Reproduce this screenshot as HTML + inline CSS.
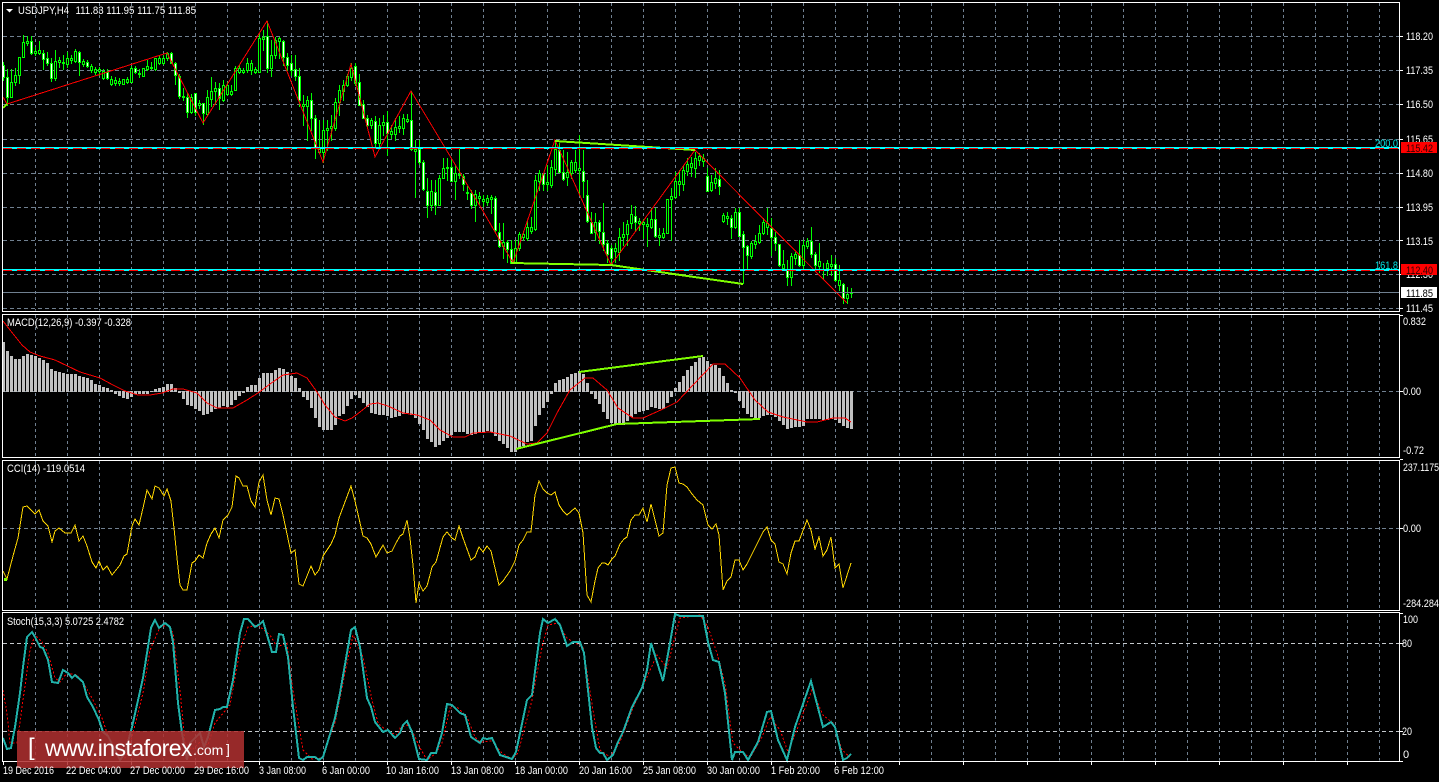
<!DOCTYPE html>
<html><head><meta charset="utf-8"><title>USDJPY,H4</title>
<style>
html,body{margin:0;padding:0;background:#000;width:1439px;height:782px;overflow:hidden}
svg{position:absolute;left:0;top:0;display:block}
text{font-family:"Liberation Sans",sans-serif;font-size:11px;fill:#fff}
#logo{position:absolute;left:17px;top:731px;width:227px;height:37px;background:rgba(176,48,48,.86);color:#fff;font-family:"Liberation Sans",sans-serif}
#logo span{position:absolute;white-space:nowrap;font-weight:400}
</style></head><body>
<svg id="c" width="1439" height="782" viewBox="0 0 1439 782" shape-rendering="crispEdges"></svg>
<div id="logo">
<span style="left:11px;top:3px;font-size:24px">[</span>
<span style="left:28px;top:4px;font-size:23px;letter-spacing:-.55px">www.instaforex</span>
<span style="left:176px;top:11px;font-size:14px">.com</span>
<span style="left:209px;top:10px;font-size:14px">]</span>
</div>
<svg width="1439" height="782" viewBox="0 0 1439 782" style="pointer-events:none">
<g>
<path d="M6 9h7l-3.5 3.5z" fill="#fff"/>
<text x="18" y="14" textLength="51" lengthAdjust="spacingAndGlyphs">USDJPY,H4</text>
<text x="75.5" y="14" textLength="120.5" lengthAdjust="spacingAndGlyphs">111.83 111.95 111.75 111.85</text>
<text x="7" y="326" textLength="124" lengthAdjust="spacingAndGlyphs">MACD(12,26,9) -0.397 -0.328</text>
<text x="7" y="472" textLength="78" lengthAdjust="spacingAndGlyphs">CCI(14) -119.0514</text>
<text x="7" y="625" textLength="117" lengthAdjust="spacingAndGlyphs">Stoch(15,3,3) 5.0725 2.4782</text>
<text x="1406" y="40" textLength="27" lengthAdjust="spacingAndGlyphs">118.20</text>
<text x="1406" y="74" textLength="27" lengthAdjust="spacingAndGlyphs">117.35</text>
<text x="1406" y="108" textLength="27" lengthAdjust="spacingAndGlyphs">116.50</text>
<text x="1406" y="143" textLength="27" lengthAdjust="spacingAndGlyphs">115.65</text>
<text x="1406" y="177" textLength="27" lengthAdjust="spacingAndGlyphs">114.80</text>
<text x="1406" y="211" textLength="27" lengthAdjust="spacingAndGlyphs">113.95</text>
<text x="1406" y="245" textLength="27" lengthAdjust="spacingAndGlyphs">113.15</text>
<text x="1406" y="278" textLength="27" lengthAdjust="spacingAndGlyphs">112.30</text>
<text x="1406" y="312" textLength="27" lengthAdjust="spacingAndGlyphs">111.45</text>
<rect x="1401" y="142" width="36" height="11" fill="#f00"/>
<text x="1406" y="152" textLength="27" lengthAdjust="spacingAndGlyphs" style="fill:#300">115.42</text>
<rect x="1401" y="264" width="36" height="11" fill="#f00"/>
<text x="1406" y="274" textLength="27" lengthAdjust="spacingAndGlyphs" style="fill:#300">112.40</text>
<rect x="1401" y="287" width="36" height="11" fill="#fff"/>
<text x="1406" y="297" textLength="27" lengthAdjust="spacingAndGlyphs" style="fill:#000">111.85</text>
<text x="1375" y="147" textLength="23" lengthAdjust="spacingAndGlyphs" style="fill:#00e5e5">200.0</text>
<text x="1375" y="269" textLength="23" lengthAdjust="spacingAndGlyphs" style="fill:#00e5e5">161.8</text>
<text x="1403" y="325" textLength="23" lengthAdjust="spacingAndGlyphs">0.832</text>
<text x="1403" y="395" textLength="18" lengthAdjust="spacingAndGlyphs">0.00</text>
<text x="1403" y="454" textLength="21" lengthAdjust="spacingAndGlyphs">-0.72</text>
<text x="1403" y="471" textLength="36" lengthAdjust="spacingAndGlyphs">237.1175</text>
<text x="1403" y="532" textLength="18" lengthAdjust="spacingAndGlyphs">0.00</text>
<text x="1403" y="607" textLength="36" lengthAdjust="spacingAndGlyphs">-284.284</text>
<text x="1403" y="623" textLength="15" lengthAdjust="spacingAndGlyphs">100</text>
<text x="1402" y="647" textLength="10" lengthAdjust="spacingAndGlyphs">80</text>
<text x="1402" y="735" textLength="10" lengthAdjust="spacingAndGlyphs">20</text>
<text x="1403" y="758">0</text>
<text x="3" y="774" textLength="51" lengthAdjust="spacingAndGlyphs">19 Dec 2016</text>
<text x="66" y="774" textLength="55" lengthAdjust="spacingAndGlyphs">22 Dec 04:00</text>
<text x="130" y="774" textLength="55" lengthAdjust="spacingAndGlyphs">27 Dec 00:00</text>
<text x="194" y="774" textLength="55" lengthAdjust="spacingAndGlyphs">29 Dec 16:00</text>
<text x="259" y="774" textLength="47" lengthAdjust="spacingAndGlyphs">3 Jan 08:00</text>
<text x="322" y="774" textLength="48" lengthAdjust="spacingAndGlyphs">6 Jan 00:00</text>
<text x="386" y="774" textLength="53" lengthAdjust="spacingAndGlyphs">10 Jan 16:00</text>
<text x="451" y="774" textLength="53" lengthAdjust="spacingAndGlyphs">13 Jan 08:00</text>
<text x="515" y="774" textLength="53" lengthAdjust="spacingAndGlyphs">18 Jan 00:00</text>
<text x="579" y="774" textLength="53" lengthAdjust="spacingAndGlyphs">20 Jan 16:00</text>
<text x="643" y="774" textLength="53" lengthAdjust="spacingAndGlyphs">25 Jan 08:00</text>
<text x="707" y="774" textLength="53" lengthAdjust="spacingAndGlyphs">30 Jan 00:00</text>
<text x="771" y="774" textLength="49" lengthAdjust="spacingAndGlyphs">1 Feb 20:00</text>
<text x="834" y="774" textLength="50" lengthAdjust="spacingAndGlyphs">6 Feb 12:00</text>
</g></svg>
<script>
(function(){
var s=document.getElementById('c'),h='';
function R(x,y,w,hh,f){h+='<rect x="'+x+'" y="'+y+'" width="'+w+'" height="'+hh+'" fill="'+f+'"/>';}
function L(x1,y1,x2,y2,c,d){h+='<line x1="'+x1+'" y1="'+y1+'" x2="'+x2+'" y2="'+y2+'" stroke="'+c+'" stroke-width="1"'+(d?' stroke-dasharray="'+d+'"':'')+'/>';}
function P(o,c,w,d){var a=[];for(var i=0;i<o.length;i++)a.push(o[i].join(','));h+='<polyline fill="none" points="'+a.join(' ')+'" stroke="'+c+'" stroke-width="'+w+'"'+(d?' stroke-dasharray="'+d+'"':'')+'/>';}
function Z(ox,oy,a){var r=[];for(var i=0;i<a.length;i+=2)r.push([Math.round(ox+a[i]/3),Math.round(oy+a[i+1]/3)]);return r;}
var G='#708090';
/* grid */
var panes=[[3,310.5],[315,456.5],[461,609.5],[614,760.5]];
for(var x=35;x<1399;x+=32){for(var i=0;i<4;i++)L(x+.5,panes[i][0],x+.5,panes[i][1],G,'3,3');}
[36,70,104,139,173,207,240,274,308,391,528].forEach(function(y){L(3,y+.5,1399,y+.5,G,'4,3');});
[643,731].forEach(function(y){L(3,y+.5,1399,y+.5,'#c4c8cc','4,3');});
/* candles */
var D=[[62,80,65,77,1],[69,105,77,97,1],[69,97,82,97],[68,85,75,82],[57,83,57,75],[35,57,42,57],[36,45,41,43],[36,54,41,53,1],[47,55,51,53],[41,54,50,53],
[50,69,53,59,1],[52,65,58,63,1],[58,81,63,78,1],[50,80,61,78],[57,67,60,62],[55,69,62,63],[52,67,58,64],[55,63,58,60],[49,62,51,61],[51,75,52,62,1],
[59,66,61,64],[60,67,62,66,1],[64,72,66,70],[67,74,69,72],[67,75,69,71],[69,79,71,78],[69,79,72,78,1],[76,85,79,84],[77,85,80,83],[78,85,81,83],
[79,84,79,84],[77,83,79,82],[66,82,68,82],[66,73,68,72,1],[69,77,73,74],[68,76,68,76],[60,70,66,69],[62,69,67,68],[58,70,58,69],[56,64,58,63],
[55,64,58,63],[52,60,53,58],[52,63,53,63,1],[62,84,63,75,1],[74,98,76,96,1],[88,100,96,97],[93,117,97,112,1],[94,113,97,112],[93,115,93,112,1],[100,108,103,105],
[104,124,103,113,1],[90,115,97,114],[77,106,91,99],[82,104,88,91],[83,109,88,98,1],[80,101,85,100],[82,95,85,94],[85,95,91,94],[66,90,68,90],[65,73,68,72],
[68,73,70,72],[58,72,63,70],[60,74,63,70],[67,73,69,72],[34,72,38,72],[30,50,37,39],[21,72,36,68,1],[40,76,55,68],[37,58,40,55],[37,58,38,41],
[40,65,41,57,1],[53,70,57,65,1],[55,75,63,70,1],[55,80,69,76,1],[68,106,76,100,1],[95,125,104,106],[96,140,100,106],[93,130,100,118,1],[115,158,118,148,1],[120,152,149,152],
[120,162,130,152],[120,150,128,130],[115,140,126,128],[98,130,102,128],[85,115,90,102],[80,100,85,91],[74,86,76,85],[63,80,68,77],[63,85,66,83,1],[74,105,82,105,1],
[100,118,104,118,1],[115,128,118,125,1],[118,128,120,125],[116,147,121,143,1],[118,148,125,143],[115,135,122,125],[111,155,122,133,1],[125,138,131,134],[118,140,127,134],[116,132,126,128],
[114,134,118,128],[114,122,119,121],[91,150,120,149,1],[140,197,149,151],[140,164,149,162,1],[160,190,162,189,1],[178,217,191,205,1],[180,210,191,205],[180,214,192,205,1],[175,205,178,205],
[158,178,168,178],[158,180,167,168],[160,180,167,181,1],[165,199,173,181],[149,178,174,175],[174,190,176,184,1],[186,199,192,193],[190,208,193,205,1],[190,221,194,205],[192,204,196,198],
[195,206,199,201],[195,205,198,202],[195,213,197,199],[196,232,198,230,1],[223,247,232,246,1],[223,258,242,246],[240,262,242,249,1],[240,263,249,263,1],[240,263,248,263],[232,250,234,248],
[231,240,234,237],[220,240,227,238],[217,233,227,231],[175,230,180,229],[170,190,173,181],[174,190,174,184,1],[165,190,182,184],[160,187,167,185],[140,175,149,169],[143,172,150,172,1],
[150,180,172,179,1],[152,185,172,177],[160,178,162,173],[150,172,162,170],[135,195,168,170],[150,197,171,181,1],[180,222,195,221,1],[212,233,222,233,1],[213,240,222,232],[220,243,222,231,1],
[203,250,232,244,1],[240,262,243,254,1],[245,265,248,258,1],[243,262,248,251],[228,260,237,252],[222,245,234,237],[220,245,224,234],[205,228,214,223],[206,230,216,222,1],[218,230,221,223],
[219,238,222,224],[218,246,224,226],[208,228,219,227],[208,237,219,236,1],[228,245,235,237],[228,238,233,237],[199,233,199,233],[188,240,196,199],[172,198,181,197],[170,195,181,184],
[165,190,170,184],[158,175,164,171],[157,176,163,167],[152,177,158,168],[153,165,156,160],[154,166,158,161],[168,191,176,191,1],[175,191,182,190],[168,188,178,183],[170,194,179,186,1],
[213,222,215,221],[212,224,216,218],[215,238,218,227,1],[208,228,212,227],[208,236,212,236,1],[231,270,234,247,1],[245,268,246,255,1],[241,258,243,256],[235,248,241,244],[225,243,233,242],
[218,234,222,233],[208,234,223,227],[218,255,228,237,1],[232,250,237,243,1],[244,266,244,265,1],[250,270,264,268],[260,285,270,277,1],[253,285,256,277],[252,264,254,258],[240,266,255,265,1],
[240,270,245,265],[238,248,241,246],[227,257,241,254,1],[252,268,254,265,1],[243,272,261,266],[263,278,269,270],[260,275,263,268],[255,275,264,266],[258,281,264,280,1],[265,290,280,285],
[283,303,284,298,1],[287,303,294,298],[288,297,292,293]];
D.forEach(function(c,k){var x=3+4*k;R(x,c[0],1,c[1]-c[0]+1,'#00ff00');});
D.forEach(function(c,k){var x=3+4*k;R(x-1,c[2],3,Math.max(c[3]-c[2]+1,2),'#00ff00');
 if(c[3]-c[2]>=2)R(x,c[2]+1,1,c[3]-c[2]-1,c[4]?'#fff':'#000');});
/* main zigzag */
P([[3,97],[7,104],[167,53],[203,123],[267,21],[323,162],[351,64],[375,157],[411,91],[480,206],[513,263],[555,140],[611,265],[695,150],[847,303]],'#f00',1);
/* green pattern lines */
P([[3,108],[7,104]],'#7fff00',2);
P([[555,141],[695,150]],'#7fff00',2);
P([[511,263],[611,265],[743,284]],'#7fff00',2);
L(743.5,270,743.5,284,'#00ff00');
/* level lines */
[148,270].forEach(function(y){R(3,y-1,1396,2,'#00ffff');L(3,y+.5,1399,y+.5,'#f00','9,5');});
R(3,292,1396,1,'#708090');
/* MACD */
var M=[95,123,138,147,147,138,132,134,138,144,150,160,178,182,187,190,192,193,192,198,200,205,210,222,224,232,235,240,250,256,262,264,258,250,250,250,248,243,238,235,232,222,222,233,247,263,283,285,295,300,312,310,304,295,290,285,288,282,268,255,246,232,225,225,204,190,190,190,180,175,178,185,197,205,234,258,268,290,322,347,357,357,357,342,315,310,285,265,252,262,275,288,305,310,312,312,315,320,317,315,310,305,312,320,340,357,383,393,407,402,390,380,372,363,363,363,370,372,368,365,365,360,362,375,390,400,412,423,423,412,405,393,390,345,313,292,273,248,220,210,207,200,192,188,184,192,218,248,265,280,303,325,335,342,342,342,330,318,308,303,300,297,288,292,293,293,277,258,235,217,198,180,168,156,143,140,153,163,165,175,198,220,240,246,270,292,310,318,326,322,316,312,313,318,330,343,354,351,348,348,345,325,324,325,325,328,326,325,326,335,345,350,354];
M.forEach(function(v,k){var y=Math.round(310+v/3),b=391,x=3+4*k-1;if(y<b)R(x,y,3,b-y+1,'#c0c0c0');else R(x,b,3,y-b+1,'#c0c0c0');});
P(Z(0,310,[9,32,30,60,65,105,90,125,120,138,165,150,240,185,300,205,340,225,375,243,415,255,450,256,485,248,520,236,550,236,590,250,620,280,650,295,700,295,740,270,775,250,810,222,850,195,890,190,920,205,950,245,975,285,1005,320,1035,332,1055,325,1080,305,1110,283,1135,280,1165,288,1210,310,1250,314,1290,330]).concat(Z(430,310,[0,330,30,360,70,382,105,380,130,370,180,365,240,378,290,402,320,398,350,370,380,310,420,240,465,203,490,205,530,240,565,295,610,325,640,323,700,297,740,275,790,225,850,163,885,163,930,205,975,270,1015,305,1060,320,1130,337,1160,337,1210,325,1245,325,1262,335])),'#f00',1);
P([[579,372],[703,356]],'#7fff00',2);
P([[516,449],[617,424],[760,419]],'#7fff00',2);
/* CCI */
P(Z(0,458,[9,338,20,362,40,295,55,240,70,148,82,143,105,168,118,157,130,190,143,205,155,252,165,218,178,210,195,225,212,225,225,200,238,250,250,235,262,265,275,312,287,330,298,308,310,337,322,323,335,350,360,320,372,295,382,287,395,205,405,183,418,200,430,150,442,95,455,123,466,83,478,90,491,113,502,92,512,130,522,210,530,300,540,380,550,396,562,395,576,315,585,308,597,290,610,300,622,255,632,228,645,210,657,240,670,187,683,170,695,148,707,55,718,60,730,85,742,85,754,130,766,148,778,73,790,52,802,125,814,172,826,120,838,122,850,170,874,285,886,277,898,378,910,384,934,325,946,350,958,335,970,295,994,258,1006,230,1018,180,1054,85,1066,130,1090,233,1102,240,1114,258,1127,298,1150,260,1162,285,1175,278,1187,255,1200,235,1210,228,1222,187,1230,240,1238,320,1247,435,1258,375,1270,400,1282,385,1290,352]).concat(Z(430,458,[5,328,17,312,40,238,52,222,65,240,75,245,88,203,100,240,124,305,135,298,148,268,160,283,172,265,184,278,208,380,220,370,240,340,254,310,266,262,278,245,290,223,304,223,315,110,328,68,340,92,352,105,364,110,376,103,388,140,400,160,412,170,436,150,446,165,460,225,472,410,484,433,495,370,505,330,515,315,525,315,535,322,545,303,556,295,570,258,582,243,592,238,604,185,616,170,628,170,640,150,652,192,664,137,676,185,688,235,700,225,712,80,724,30,735,27,748,75,760,78,772,88,785,108,800,125,820,140,835,200,845,213,857,197,866,232,880,395,892,368,904,357,916,305,928,305,940,337,952,318,1000,222,1012,208,1024,245,1036,258,1048,312,1060,318,1072,348,1084,285,1096,250,1108,248,1132,187,1144,215,1156,272,1168,238,1180,293,1192,275,1204,238,1216,330,1228,318,1240,390,1264,315])),'#ffd700',1);
R(4,578,3,3,'#7fff00');
/* Stoch */
P(Z(0,610,[9,240,20,310,30,400,50,400,72,250,90,120,105,75,125,95,145,130,165,205,180,215,200,190,230,195,250,215,275,265,305,325,320,370,345,425,375,445,395,380,430,250,450,120,480,50,505,45,520,70,540,240,555,400,575,420,600,395,625,405,645,340,690,285,720,120,745,50,775,45,810,75,830,110,860,100,880,240,910,420,935,448,965,445,1005,340,1035,190,1060,75,1090,140,1115,270,1135,340,1165,365,1195,375]).concat(Z(400,610,[0,355,20,345,35,360,60,415,80,450,108,430,125,400,150,295,170,290,200,320,225,380,240,395,275,392,305,430,335,447,355,430,395,270,425,110,445,45,475,40,500,85,520,97,550,110,580,300,600,420,630,440,660,395,700,295,740,200,770,135,800,175,825,80,840,25,900,15,925,50,950,130,975,220,1000,400,1020,420,1050,445,1085,380,1110,320,1140,360,1165,425,1195,350,1235,240,1270,315,1300,340,1325,420,1350,440])),'#f00',1,'2,2');
P(Z(0,610,[9,385,22,418,33,415,45,350,60,250,70,170,82,80,95,65,105,80,120,110,130,115,145,150,155,215,175,218,190,180,205,190,215,203,225,195,250,215,262,260,280,290,297,330,310,365,325,378,345,420,360,450,375,430,395,350,430,205,452,55,465,30,477,55,495,38,510,50,520,95,535,280,545,370,560,450,570,400,585,385,600,370,612,410,625,380,645,300,660,298,670,290,682,290,700,210,720,70,733,27,745,28,765,50,780,42,790,33,815,125,828,127,838,72,850,75,865,140,880,290,898,445,910,450,920,440,945,440,958,450,970,440,1005,325,1020,250,1052,60,1065,52,1080,110,1100,265,1112,290,1125,335,1150,365,1165,360,1185,385,1200,370]).concat(Z(400,610,[8,345,20,332,35,365,57,447,80,450,92,428,108,428,125,370,142,283,155,285,180,308,195,315,212,380,240,400,250,383,262,388,275,385,300,435,318,440,335,447,347,425,380,270,395,255,420,70,430,28,445,40,465,27,480,45,500,108,520,97,540,97,552,130,575,350,587,415,600,428,610,428,622,450,640,435,655,395,670,365,695,290,725,235,740,180,752,98,790,212,810,100,825,12,840,17,880,17,910,17,925,95,940,150,958,157,975,250,995,450,1005,425,1028,425,1043,450,1075,395,1100,305,1113,303,1135,390,1162,450,1185,350,1233,212,1270,350,1292,335,1305,350,1330,450,1340,445,1353,432])),'#20b2aa',2);
/* frames */
[[2,2,311],[2,314,457],[2,460,610],[2,612,761]].forEach(function(f){var t=f[1],b=f[2];
 R(2,t,1398,1,'#fff');R(2,b,1398,1,'#fff');R(2,t,1,b-t+1,'#fff');R(1399,t,1,b-t+1,'#fff');});
/* axis ticks */
[36,70,104,139,173,207,240,274,308,391,528,643,731,315,459,613,761].forEach(function(y){R(1400,y,3,1,'#fff');});
for(var x=3;x<1399;x+=64)R(x,761,1,4,'#fff');
s.innerHTML=h;
})();
</script>
</body></html>
